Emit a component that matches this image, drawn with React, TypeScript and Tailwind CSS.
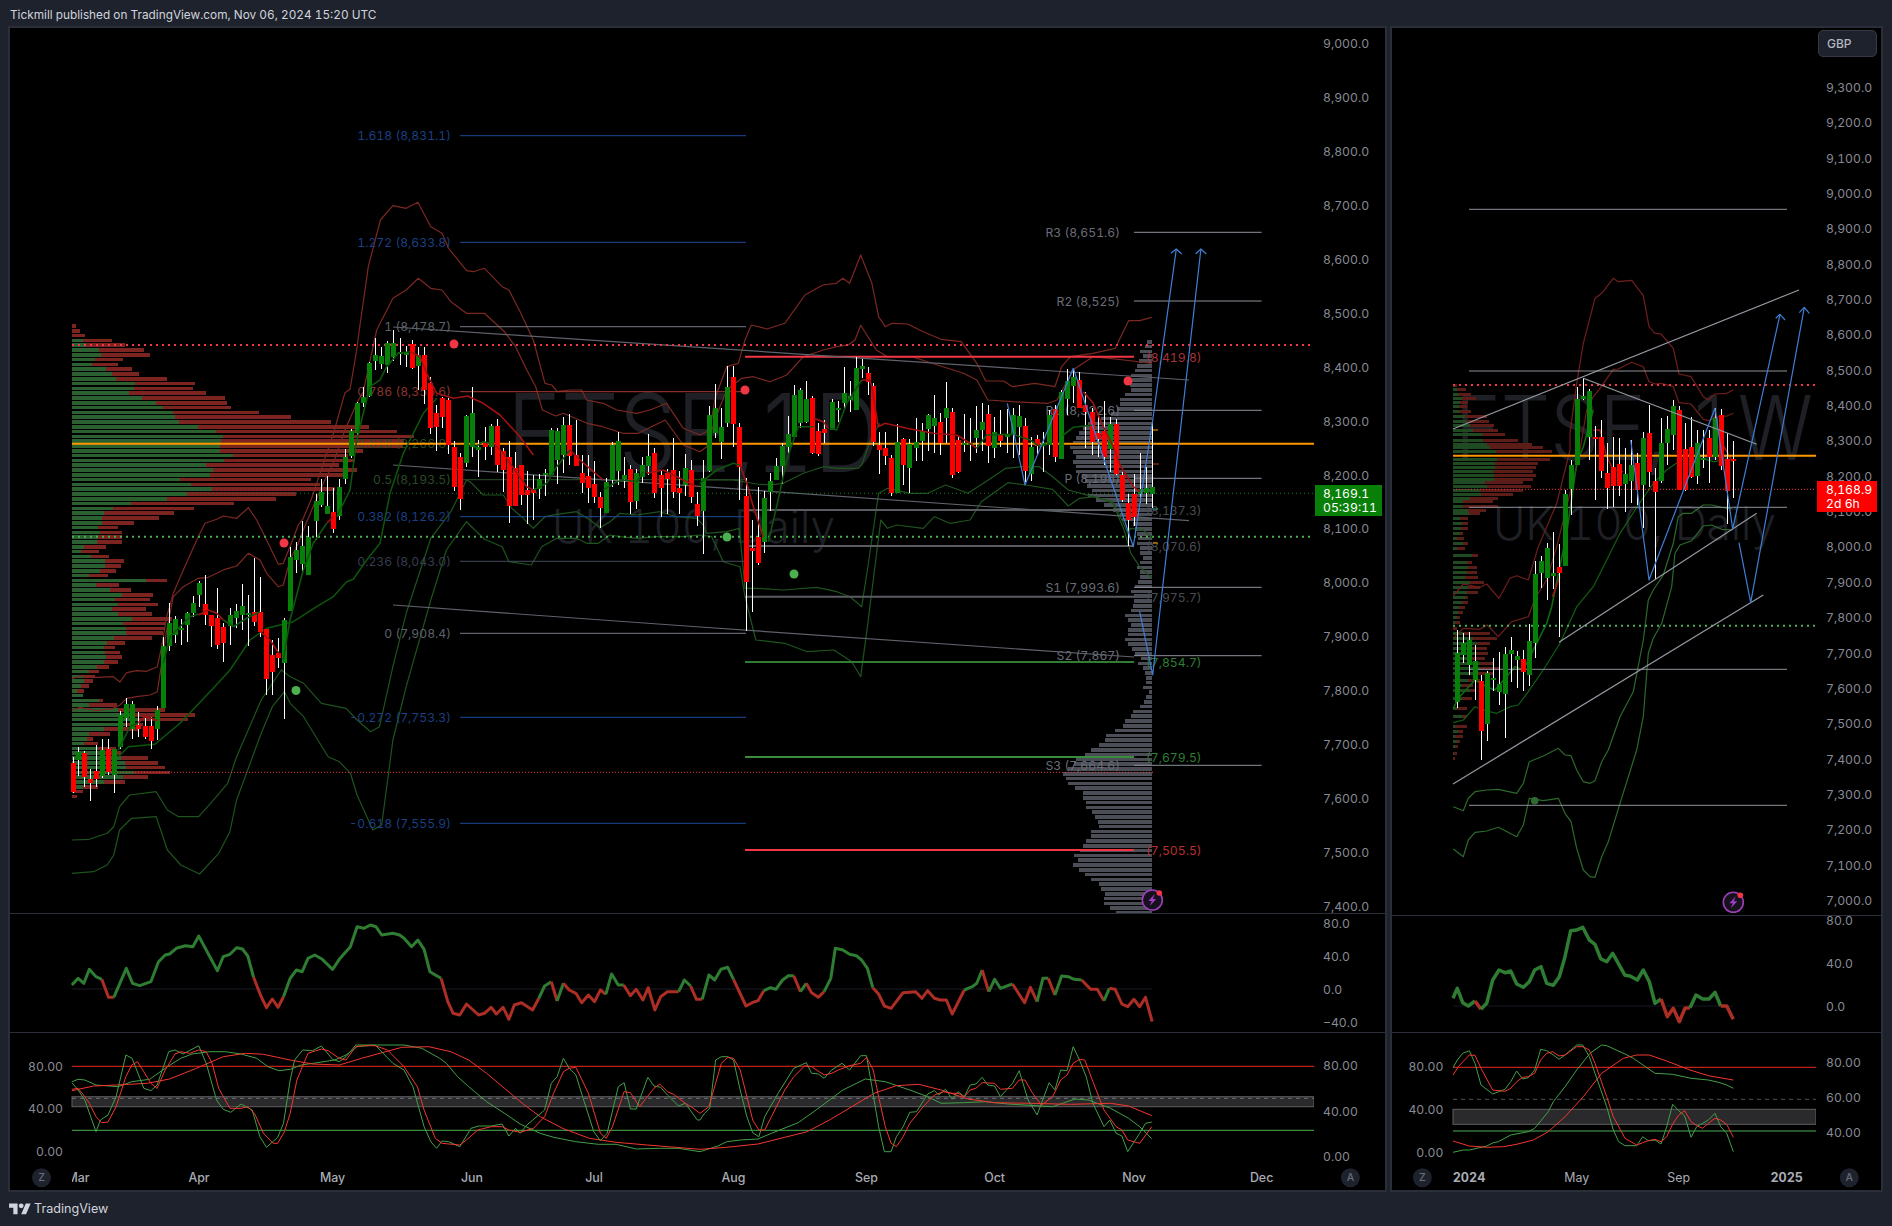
import React from "react";

const Z = (x0: number, y0: number, sx: number) => (...a: number[]) => {
  const o: string[] = [];
  for (let i = 0; i < a.length; i += 2) o.push((x0 + a[i] / sx).toFixed(1) + "," + (y0 + a[i + 1] / 3).toFixed(1));
  return o;
};
const z1 = Z(0, 0, 2.24), z2 = Z(700, 200, 2.24), z4 = Z(0, 900, 2.24), z5 = Z(700, 900, 2.24), z7 = Z(0, 500, 2.24);
const z10 = Z(70, 330, 3), z11 = Z(470, 340, 3), z12 = Z(800, 340, 3), z3 = Z(1380, 0, 3), z6 = Z(1380, 900, 3), z8 = Z(1000, 430, 3), z9 = Z(1400, 450, 3);
const L = (...a: string[][]) => a.flat().join(" ");

const GC = "#087f08", RC = "#ff0000";
const P = ({ p, c, w = 1, d }: { p: string; c: string; w?: number; d?: string }) => (
  <polyline points={p} fill="none" stroke={c} strokeWidth={w} strokeDasharray={d} strokeLinejoin="round" />
);
const H = ({ a, b, y, c, w = 1, d }: { a: number; b: number; y: number; c: string; w?: number; d?: string }) => (
  <line x1={a} x2={b} y1={y} y2={y} stroke={c} strokeWidth={w} strokeDasharray={d} />
);
const T = ({ x, y, c, a = "start", s = 12.2, w, children }: any) => (
  <text x={x} y={y} fill={c} textAnchor={a} fontSize={s} fontWeight={w} dominantBaseline="central">{children}</text>
);

type C = number[];
const candles = (data: C[], x0: number, y0: number, sx: number, bw = 5) =>
  data.map((d, i) => {
    const [zx, g, bt, bb, wt, wb] = d;
    const x = x0 + zx / sx;
    return (
      <g key={i} shapeRendering="crispEdges">
        <rect x={Math.round(x) - 0.5} y={y0 + wt / 3} width={1} height={(wb - wt) / 3} fill="#fff" />
        <rect x={Math.round(x) - (bw - 1) / 2 - 0.5} y={y0 + bt / 3} width={bw} height={Math.max(2, (bb - bt) / 3)} fill={g ? GC : RC} />
      </g>
    );
  });

const C10: C[] = [[10,0,1300,1385,1282,1390],[25,1,1266,1290,1250,1338],[43,0,1270,1340,1262,1372],[61,0,1348,1358,1318,1412],[79,0,1324,1348,1244,1372],[97,1,1260,1338,1228,1345],[115,0,1258,1326,1226,1334],[133,1,1258,1336,1258,1390],[151,1,1156,1250,1144,1258],[169,1,1122,1165,1104,1190],[187,1,1122,1197,1112,1226],[205,0,1185,1197,1146,1220],[226,0,1188,1220,1165,1226],[244,0,1188,1234,1162,1258],[262,1,1140,1196,1128,1230],[280,1,948,1134,920,1134],[298,1,880,948,820,962],[316,1,868,916,858,940],[334,1,895,898,868,945],[352,1,849,886,845,935],[370,1,820,848,798,860],[388,1,760,795,752,830],[406,0,822,854,736,885],[424,0,856,887,856,952],[442,0,864,945,775,957],[460,0,891,938,880,995],[480,1,856,887,835,945],[499,1,844,863,822,895],[517,1,828,854,762,900],[535,1,848,854,796,947],[553,0,846,875,685,888],[571,0,846,905,742,920],[589,0,897,1046,897,1094],[607,0,975,1025,930,1094],[625,0,969,983,924,1013],[643,1,870,998,865,1166],[661,1,682,842,652,842],[679,1,660,689,635,730],[697,1,648,701,573,726],[715,1,620,734,588,734],[737,1,513,572,491,630],[754,1,487,524,447,530],[772,1,528,551,437,552],[790,0,546,596,474,608],[808,1,471,557,447,570],[826,1,382,448,358,462],[844,1,303,377,298,385],[862,1,220,308,215,325],[880,1,201,220,170,230],[898,1,100,198,95,200],[916,1,76,92,25,120],[934,1,78,101,50,118],[952,1,40,104,32,128],[970,1,40,80,0,92],[990,1,66,70,25,105],[1008,1,68,72,48,112],[1026,0,42,113,30,116],[1044,1,76,107,50,180],[1062,0,76,180,52,222],[1081,0,160,293,140,312],[1099,0,250,290,226,362],[1117,0,205,260,200,295],[1135,0,210,344,205,372],[1153,0,352,472,334,482],[1171,0,382,506,370,540],[1189,1,258,400,255,410]];
const C11: C[] = [[7,1,220,322,141,350],[25,1,322,329,300,410],[46,0,307,320,262,360],[64,1,258,320,252,345],[82,0,258,374,237,396],[100,0,333,389,325,456],[118,0,351,497,303,548],[136,0,384,497,337,497],[154,0,376,464,376,495],[172,0,450,464,393,552],[190,0,450,458,405,540],[208,1,418,446,402,476],[226,1,400,406,388,468],[244,1,270,405,265,405],[262,1,274,359,265,432],[280,1,255,345,232,398],[298,0,255,347,222,376],[319,0,345,377,240,377],[337,0,400,429,345,458],[355,0,408,443,345,490],[373,0,432,471,363,488],[391,0,471,503,456,563],[409,1,426,518,414,518],[427,1,315,419,307,442],[445,1,303,392,276,436],[463,1,405,418,350,445],[481,0,388,485,376,521],[499,1,400,483,388,507],[517,1,376,411,350,428],[535,1,348,377,283,405],[553,0,339,460,323,473],[574,0,405,443,392,530],[592,0,400,418,388,521],[610,0,390,455,294,473],[628,0,444,460,394,521],[646,1,385,436,342,469],[664,0,390,470,360,488],[682,0,492,527,455,557],[700,1,415,512,360,641],[718,1,225,392,198,395],[736,1,204,278,132,295],[754,1,262,305,205,356],[772,1,141,248,78,262],[790,0,111,251,78,320],[808,0,262,380,250,480],[829,0,468,725,415,873],[847,0,624,632,540,815],[865,0,591,668,441,675],[883,1,474,605,453,640],[901,1,423,455,400,513],[919,1,378,420,355,420],[937,1,318,377,310,432],[955,1,283,320,228,340],[973,1,165,290,135,293],[991,1,150,250,145,265],[1009,1,177,245,123,250],[1027,0,174,339,168,343],[1045,0,274,342,250,347],[1063,0,267,278,240,310],[1085,1,186,269,178,270],[1103,1,204,210,183,245],[1121,1,159,189,82,205],[1139,1,168,180,123,215],[1157,1,84,209,52,209],[1175,1,78,86,58,115],[1193,0,99,125,80,165]];
const C12: C[] = [[220,0,138,307,130,318],[238,0,316,330,276,403],[256,0,324,347,275,375],[274,0,354,459,345,467],[292,1,306,460,252,460],[310,0,297,374,295,435],[328,1,312,384,298,458],[349,1,306,323,235,363],[367,1,273,304,248,362],[385,1,225,267,222,332],[403,1,234,258,164,340],[421,0,246,309,220,345],[439,1,204,233,126,310],[457,0,216,404,205,413],[475,0,300,396,290,398],[493,1,310,313,222,335],[511,1,310,312,235,362],[529,1,271,294,197,340],[547,1,246,270,188,332],[565,0,222,318,195,368],[583,1,276,323,232,355],[601,0,285,303,210,322],[622,1,284,286,208,338],[640,1,226,284,205,353],[658,1,228,261,195,345],[676,0,258,393,235,425],[694,1,321,402,290,422],[712,0,297,318,285,345],[730,1,310,316,275,395],[748,1,225,316,210,345],[766,0,208,352,196,365],[784,1,155,356,150,358],[802,1,124,177,88,225],[820,1,112,138,85,190],[838,0,120,204,95,205],[856,0,196,216,155,325],[877,0,216,306,205,345],[895,0,279,297,225,350],[913,0,273,351,183,375],[931,1,252,326,232,397],[949,0,252,402,238,405],[967,0,406,480,395,485],[985,0,490,540,462,617],[1003,0,462,530,402,558],[1021,1,448,462,340,490],[1039,1,443,460,380,492],[1057,1,441,461,240,505]];
const CR: C[] = [[232,1,1960,2105,1890,2125],[250,1,1930,1965,1900,1990],[268,1,1920,1995,1895,2025],[286,1,1983,2040,1935,2100],[304,0,2042,2192,2025,2280],[322,1,2020,2172,2012,2222],[340,1,2035,2038,1975,2072],[358,1,2053,2075,1955,2115],[376,1,1962,2082,1940,2213],[394,1,1950,1962,1912,2045],[412,1,1968,1980,1952,2065],[430,0,1978,2016,1950,2072],[448,1,1923,2025,1872,2058],[466,1,1722,1928,1683,1973],[484,1,1683,1718,1668,1765],[502,1,1643,1733,1630,1800],[520,1,1720,1727,1596,1768],[538,0,1702,1719,1632,1910],[556,1,1482,1697,1470,1697],[574,1,1395,1468,1380,1545],[592,1,1197,1395,1160,1395],[610,1,1187,1198,1135,1200],[628,1,1173,1310,1167,1380],[646,0,1312,1316,1278,1500],[664,0,1311,1412,1260,1433],[682,0,1420,1463,1330,1527],[700,0,1402,1458,1310,1520],[718,0,1392,1458,1315,1488],[736,1,1422,1452,1345,1535],[754,1,1395,1443,1320,1508],[772,0,1390,1470,1360,1515],[790,1,1314,1455,1295,1585],[808,0,1300,1415,1215,1462],[826,0,1443,1475,1405,1738],[844,1,1330,1442,1255,1450],[862,1,1288,1328,1248,1395],[880,1,1218,1304,1200,1350],[898,0,1230,1469,1218,1470],[916,0,1347,1469,1270,1472],[934,0,1340,1430,1250,1435],[952,1,1330,1428,1290,1452],[970,1,1375,1378,1290,1405],[988,0,1314,1372,1290,1450],[1006,1,1253,1372,1225,1380],[1024,0,1246,1397,1228,1410],[1042,0,1378,1472,1300,1572],[1060,0,1378,1380,1323,1493]];

const VPL: number[][] = [[161,170],[161,179],[161,190],[185,251],[193,280],[222,323],[226,336],[212,276],[206,264],[238,296],[250,311],[260,374],[302,437],[300,432],[290,461],[318,504],[350,508],[365,517],[388,580],[392,652],[400,741],[444,827],[484,889],[500,927],[495,905],[492,903],[492,813],[522,780],[502,795],[462,760],[478,800],[470,770],[404,697],[428,716],[475,750],[418,663],[374,618],[294,524],[252,435],[232,390],[228,356],[228,300],[220,264],[225,273],[220,273],[218,273],[188,237],[182,222],[204,244],[236,278],[236,271],[224,260],[199,242],[328,374],[216,267],[246,293],[274,343],[258,336],[264,354],[250,327],[264,340],[296,385],[276,370],[282,370],[282,366],[256,340],[240,280],[234,258],[236,269],[238,273],[234,264],[218,244],[200,222],[186,213],[188,208],[182,199],[172,188],[186,186],[222,231],[200,262],[264,370],[300,437],[310,421],[280,320],[234,312],[200,246],[195,208],[188,220],[220,260],[230,270],[270,332],[280,354],[283,370],[300,380],[276,332],[234,280],[185,220],[166,186],[162,172]];
const VPR: number[][] = [[1156,224,230],[1168,232,258],[1182,238,272],[1195,245,287],[1207,240,265],[1220,238,262],[1233,236,272],[1250,255,320],[1263,260,327],[1276,270,342],[1290,280,354],[1303,306,375],[1320,310,414],[1333,320,456],[1343,330,488],[1355,348,515],[1378,350,510],[1390,345,473],[1402,345,467],[1414,340,460],[1426,342,468],[1437,342,459],[1448,315,430],[1460,320,452],[1470,300,428],[1483,302,398],[1495,270,355],[1505,250,340],[1518,250,355],[1531,265,318],[1541,267,300],[1556,240,265],[1571,245,265],[1586,242,265],[1601,240,250],[1616,230,252],[1631,250,265],[1646,230,255],[1666,275,295],[1686,260,275],[1701,265,290],[1716,260,292],[1731,255,295],[1746,270,312],[1761,265,300],[1776,260,295],[1791,255,265],[1806,245,265],[1821,238,255],[1836,235,250],[1851,230,240],[1866,225,240],[1886,220,230],[1900,250,330],[1915,280,350],[1930,290,330],[1945,280,320],[1960,285,325],[1975,275,315],[1990,300,340],[2005,300,360],[2020,290,340],[2040,265,300],[2055,245,280],[2070,270,285],[2095,245,275],[2125,230,260],[2150,245,260],[2180,225,260],[2195,235,250],[2210,225,250],[2225,230,240],[2240,225,235],[2260,223,230],[2275,220,225]];

const grayKnots = [[340,1147],[355,1140],[370,1135],[385,1129],[400,1122],[410,1115],[425,1084],[440,1073],[460,1073],[480,1085],[497,1093],[510,1117],[527,1135],[543,1140],[577,1140],[587,1134],[603,1134],[613,1128],[643,1128],[650,1134],[660,1140],[673,1146],[697,1146],[705,1140],[712,1134],[722,1122],[733,1110],[740,1104],[747,1092],[753,1085],[763,1073],[773,1062],[778,1067],[790,1079],[800,1085],[810,1092],[820,1098],[833,1092],[840,1085],[850,1079],[863,1073],[873,1085],[880,1098],[897,1104],[907,1110],[912,1117]];
const grayLeft = (y: number) => {
  for (let i = 1; i < grayKnots.length; i++) {
    const [a, b] = grayKnots[i - 1], [c, d] = grayKnots[i];
    if (y <= c) return b + ((y - a) / (c - a)) * (d - b);
  }
  return 1117;
};
const grayRows: number[] = [];
for (let y = 340; y <= 912; y += 4.8) grayRows.push(y);

const Rr1 = L(z10(6,1045,40,1036,80,1042,130,1040,150,1056,170,1028,200,1022,230,1024,262,1010,275,950,290,860,310,790,340,720,385,620,405,580,440,568,460,558,500,565,535,533,560,570,580,610,625,703,640,700,660,650,685,585,700,565,725,505,760,400,790,312,825,188,840,178,860,60,868,0), z1(825,800,852,660,880,617,910,625,936,607,965,680,990,700,1005,745,1045,812,1060,815,1085,805,1125,860,1140,870,1165,935), z11(190,0,225,130,245,135,262,155,300,150,335,150,350,180,400,190,440,210,500,220,540,210,590,190,610,220,640,265,690,285,720,270,735,175,770,80,805,70,825,0), z2(115,375,150,387,190,370,235,285,275,255,305,250,320,235,335,250,360,165,385,250,400,350,415,380,430,370,465,372,500,395,540,418,585,425,620,490,640,543,680,543,700,560,750,550,795,560,810,500,830,470,880,460,930,445,960,362,985,362,1012,352));
const Rr2 = L(z10(6,1140,30,1133,80,1142,130,1135,150,1125,170,1105,200,1100,240,1095,262,1085,275,1000,290,900,310,800,340,770,385,745,415,742,465,718,500,708,535,670,570,690,590,730,625,770,640,765,660,690,685,640,700,600,725,540,760,460,790,400,825,300,860,220,880,185,920,0), z1(880,895,910,870,937,835,965,865,990,870,1010,905,1045,940,1085,940,1130,995,1155,1040,1180,1110,1200,1160,1215,1230,1245,1248,1262,1240,1315,1270,1350,1280,1395,1300,1430,1300,1490,1260), z11(640,315,690,335,710,320,735,240,750,200,770,150,815,115,850,110,900,125,950,105,1000,50,1060,30,1100,20,1135,15,1155,0), z2(360,376,395,450,420,470,475,470,520,490,590,520,620,540,645,600,700,605,780,610,800,600,835,510,880,470,950,480,1012,490));
const Gg1 = L(z7(161,1020,200,1018,240,1000,255,980,268,920,290,885,350,875,375,930,400,950,445,950,475,905,510,850,530,770,585,600,630,510,650,530,680,550,720,610,775,625,800,660,830,695,850,680,880,500,910,340,965,115,1010,35,1045,-60), z11(0,425,40,465,100,465,125,505,160,535,190,565,225,530,260,523,320,515,360,540,390,563,420,545,450,520,500,525,570,515,620,530,680,535,700,555,710,580,770,575,808,565,825,745,860,745,940,750,1040,742,1100,755,1140,770,1175,800), z2(375,1110,400,880,420,865,470,880,510,880,550,855,600,880,640,845,685,805,720,800,760,800,790,830,825,870,880,890,925,905,945,960,960,1005), z8(390,295,430,300,457,325));
const Gg2 = L(z7(161,1120,210,1115,240,1095,255,1065,268,990,295,955,350,950,375,1050,405,1095,447,1122,490,1060,515,995,530,900,585,700,610,620,637,575,650,610,680,650,735,770,760,785,785,820,800,885,835,990,855,975,880,720,910,560,965,300,1000,150,1045,65,1085,118,1125,140,1140,185,1190,195), z11(215,620,260,595,320,595,350,610,385,610,420,585,450,590,500,595,560,590,640,590,690,585,725,590,760,665,810,680,825,770), z2(125,1320,190,1330,240,1355,300,1350,340,1385,360,1430,375,1280,405,960,420,985,440,975,500,985,525,950,560,970,605,960,630,905,690,848,730,855,790,868,825,918,850,895,885,890,925,910,950,990,965,1060,985,1100,1012,1135));
const MS = L(z10(145,1280,175,1250,255,1243,330,1180,430,1075,480,1020,540,930,590,895,670,875,740,830,790,800,830,755,850,748,890,690,930,640,960,490,1000,370,1060,250,1100,205));
const MM = L(z11(700,420,790,420,860,432,900,435,940,430,1000,400,1060,380,1100,385,1165,385), z12(185,375,215,290,240,250));
const MAG = "#0d560d", MAR = "#a01212";
const fastL: [string, string][] = [
  [MAG, L(z10(145,1260,180,1190,205,1178))],
  [MAR, L(z10(205,1178,225,1160,245,1165,262,1172))],
  [MAG, L(z10(280,1000,300,920,360,860,385,852))],
  [MAR, L(z10(385,855,415,840,440,850,460,870))],
  [MAG, L(z10(460,870,490,890,530,865,570,845))],
  [MAR, L(z10(570,905,600,930,630,975))],
  [MAG, L(z10(640,990,660,870,700,720,730,640,770,580))],
  [MAR, L(z10(770,580,790,560))],
  [MAG, L(z10(800,560,840,480,860,330,880,250,900,170,930,150,950,110,985,70,1020,65))],
  [MAR, L(z10(1020,65,1050,80,1070,130,1100,190,1150,205,1195,198), z11(0,172))],
  [MAR, L(z11(0,172,40,190,90,225,150,290,190,345))],
  [MAG, L(z11(10,325,40,305,60,310))],
  [MAR, L(z11(70,310,100,340,120,370,170,440,190,450))],
  [MAG, L(z11(190,450,230,430,260,380,300,330))],
  [MAR, L(z11(300,330,330,360,370,395,400,420))],
  [MAG, L(z11(400,450,440,425,460,420,500,425,520,395))],
  [MAR, L(z11(530,400,580,390,620,410,680,440))],
  [MAG, L(z11(690,430,740,390,790,370,810,375))],
  [MAR, L(z11(810,375,830,430,850,500,880,590))],
  [MAG, L(z11(895,605,920,500,950,360,985,260,1030,260))],
  [MAR, L(z11(1030,235,1060,245,1075,265))],
  [MAG, L(z11(1080,265,1100,270,1130,190,1175,120))],
  [MAR, L(z11(1175,120,1200,120), z12(215,140,235,260,255,250,320,265,400,280,470,285,510,310,530,325))],
  [MAG, L(z12(530,325,560,285,640,283,690,300,720,320,750,310))],
  [MAG, L(z12(790,285,820,262,880,255))],
  [MAR, L(z12(850,155,880,190,905,250,940,320,960,375,1000,440,1020,455))],
];

const seg = (cs: [number, string[]][], w: number) =>
  cs.map(([g, p], i) => <P key={i} p={p.join(" ")} c={g ? "#2e7d32" : "#ad2e24"} w={w} />);

const oscL: [number, string[]][] = [
  [1,z4(161,255,175,235,188,250,200,208,215,230,228,238)],[0,z4(228,238,243,292,255,292)],
  [1,z4(255,292,283,205,297,250,313,257,338,245,355,185,370,165,380,162,395,145,415,137,432,140,445,108,487,212,500,170,515,163,530,143,543,147,555,168,568,232)],
  [0,z4(568,232,585,290,597,323,610,297,623,322,635,290)],
  [1,z4(635,290,650,235,664,210,677,215,690,175,705,165,722,178,745,208,760,178,785,140,800,80,815,85,830,75,842,80,855,105,880,100,895,105,905,115,922,140,936,120,950,148,963,215,975,225,988,235)],
  [0,z4(988,235,1003,305,1015,340,1030,345,1045,312,1072,345,1085,340,1100,322,1112,342,1127,322,1140,358,1152,315,1168,308,1193,330,1207,295)],
  [1,z4(1207,295,1220,258,1235,245)],[0,z4(1235,245,1248,303)],[1,z4(1248,303,1262,250)],
  [0,z4(1262,250,1275,270,1290,280,1303,308,1318,285,1332,305,1345,270,1357,283)],
  [1,z4(1357,283,1370,222,1385,255,1397,255)],
  [0,z4(1397,255,1412,287,1425,268,1440,300,1452,263,1467,330,1480,290,1495,275,1510,275,1520,275)],
  [1,z4(1520,275,1533,240,1547,258)],[0,[...z4(1547,258,1560,298,1568,298),...z5(5,298)]],
  [1,z5(5,298,20,225,33,240,47,208,62,202,75,238)],[0,z5(75,238,103,318,117,308,130,302,143,272)],
  [1,z5(143,272,158,263,170,268,185,240,198,227,210,227)],[0,z5(210,227,225,275)],[1,z5(225,275,238,250)],
  [0,z5(238,250,250,278,265,292,278,275)],
  [1,z5(278,275,293,235,303,145,320,150,335,163,350,167,362,180,375,205,387,263)],
  [0,z5(387,263,400,282,413,318,428,325,455,278,483,275,497,295,510,272,525,295,538,300,552,300,565,342,592,270)],
  [1,z5(592,270,610,260,620,250,632,210)],[0,z5(632,210,647,275)],[1,z5(647,275,660,238,673,265,700,252)],
  [0,z5(700,252,727,308,740,262,755,305)],[1,z5(755,305,768,235,780,235)],[0,z5(780,235,795,285)],
  [1,z5(795,285,810,228,825,230,838,238,855,240)],[0,z5(855,240,875,268,890,268,905,302)],[1,z5(905,302,917,265)],
  [0,z5(917,265,930,268,945,312,958,320,972,298,985,320,998,292,1013,365)],
];
const oscR: [number, string[]][] = [
  [1,z6(219,295,232,265,248,308,265,318,285,303)],[0,z6(285,303,303,328)],
  [1,z6(303,328,320,310,338,240,357,210,375,218,392,213,410,252,430,262,448,245,464,210,483,200,500,250,520,256,538,230,555,170,572,92,590,90,608,82,628,120,645,133,662,176,680,185,698,160,735,226,750,228,772,240,790,210,808,245,825,310,843,297)],
  [0,z6(843,297,862,350,880,325,898,365,915,325,930,323)],
  [1,z6(930,323,948,285,968,297,987,297,1005,277,1022,318)],[0,z6(1022,318,1040,318,1060,358)],
];

const stG = "#43a047", stR = "#f4362e";
const fgL = L(z4(161,548,175,570,190,600,215,695,225,660,242,645,260,590,282,465,296,475,322,565,338,572,352,555,378,455,392,450,410,462,445,437,462,490,485,600,500,628,517,637,540,612,565,630,582,710,597,742,622,712,635,670,650,540,660,480,678,450,700,452,720,438,745,478,760,485,775,470,797,435,840,435,880,490,905,510,925,560,950,680,965,725,978,745,990,723,1005,725,1030,740,1055,685,1072,678,1100,678,1125,672,1140,708,1155,685,1165,700,1180,675,1220,630,1235,550,1248,530,1262,475,1275,505,1290,525,1305,590,1330,695,1345,722,1360,700,1385,560,1398,548,1412,627,1425,627,1451,532,1465,558,1480,562,1495,585,1520,618,1535,610,1562,660,1568,660), z5(10,640,22,625,35,480,48,470,62,470,75,480,90,570,105,650,118,698,132,710,145,650,175,580,210,505,238,488,250,520,265,522,278,535,295,510,318,490,335,510,360,467,373,467,385,560,400,680,413,755,428,755,440,710,455,680,470,637,485,635,510,582,525,572,535,585,550,568,565,598,578,575,592,590,605,555,618,552,632,532,645,555,660,558,673,590,700,550,715,512,735,600,755,645,782,548,795,570,808,510,822,512,836,440,850,480,865,530,880,610,905,680,918,660,932,700,945,708,958,755,985,700,998,670,1012,666));
const frL = L(z4(161,568,175,565,190,590,200,610,215,650,228,668,242,666,260,620,282,530,295,495,308,485,322,515,338,550,352,565,370,510,392,462,405,455,425,460,445,450,462,455,475,490,490,565,515,625,540,625,555,620,570,640,590,700,612,730,622,730,637,695,650,640,665,540,690,460,720,447,735,452,760,475,775,480,797,440,815,437,840,437,868,450,905,500,935,560,950,630,975,715,990,730,1030,735,1045,720,1070,690,1100,680,1125,680,1140,690,1165,697,1195,685,1220,650,1240,580,1262,515,1275,505,1290,502,1318,580,1345,700,1358,715,1372,680,1398,575,1412,578,1433,620,1450,590,1465,565,1478,552,1495,575,1508,582,1535,610,1550,622,1568,640), z5(20,620,35,550,48,490,62,472,75,475,90,510,105,590,118,660,132,690,145,690,160,650,175,610,190,570,210,530,235,497,250,500,278,525,295,520,310,510,335,497,360,490,373,472,388,510,400,590,415,680,428,730,440,740,455,710,470,670,500,620,525,585,545,575,565,580,578,580,592,590,605,570,618,565,632,548,660,550,673,568,700,565,715,540,728,540,745,580,765,615,790,590,808,540,822,525,836,490,850,478,862,480,880,545,905,630,932,680,945,690,958,720,985,730,1012,680));
const sgL = L(z4(161,545,175,538,190,540,215,555,265,560,295,545,335,538,375,500,405,475,430,462,470,455,505,455,540,462,575,475,600,500,625,512,650,508,675,495,710,488,750,480,775,465,800,440,840,435,905,435,945,445,985,475,1000,490,1025,530,1050,560,1090,605,1130,640,1165,672,1210,700,1240,712,1290,725,1340,733,1380,733,1425,747,1480,745,1520,745,1568,755), z5(40,738,60,725,90,720,130,717,160,700,220,668,260,630,320,570,370,537,415,545,470,570,510,590,540,610,590,608,640,605,690,612,790,620,840,597,870,600,920,625,960,655,985,680,1012,716));
const srL = L(z4(161,572,210,558,260,555,330,550,380,537,440,505,500,470,550,460,590,463,650,480,700,492,760,495,810,475,900,442,960,440,1010,455,1050,480,1090,520,1130,565,1170,610,1210,650,1260,685,1320,715,1380,727,1450,735,1568,748), z5(60,742,130,732,190,712,240,695,290,660,340,620,390,580,440,557,490,553,540,570,600,597,660,608,740,610,830,613,920,610,960,618,1012,647));

const fgR = L(z6(219,503,232,480,248,460,268,452,285,490,303,555,338,582,375,568,392,545,410,513,428,537,445,533,464,510,482,448,500,452,520,465,537,478,555,465,590,435,608,435,628,470,645,520,680,620,700,690,716,725,735,737,770,737,788,710,805,722,825,720,843,732,860,680,878,613,896,632,914,648,933,712,950,680,968,670,985,660,1005,640,1022,680,1040,700,1060,755));
const frR = L(z6(219,525,235,500,268,465,285,466,303,505,338,570,375,574,392,565,410,545,428,532,445,530,464,520,482,480,500,460,518,455,537,468,555,465,590,440,608,440,628,450,645,490,680,590,700,650,735,715,770,735,788,728,805,722,825,718,843,725,860,710,878,672,896,645,914,632,933,665,950,677,968,685,985,670,1005,655,1022,660,1040,673,1060,712));
const sgR = L(z6(219,757,250,750,268,750,320,738,340,728,355,725,392,705,445,695,464,685,505,635,520,605,555,560,590,510,630,460,665,435,680,437,735,462,760,475,825,520,878,523,933,535,985,540,1020,548,1040,555,1060,565));
const srR = L(z6(219,723,268,738,320,742,370,740,410,733,460,720,505,695,555,650,610,590,665,520,730,475,770,465,808,465,860,483,930,510,985,527,1060,540));

const Bolt = ({ x, y }: { x: number; y: number }) => (
  <g transform={`translate(${x} ${y})`}>
    <circle r={10} fill="#16111c" stroke="#9c3fb8" strokeWidth={1.6} />
    <path d="M2.5 -6 L-4 1 H-0.5 L-2.5 6 L4 -1 H0.5 Z" fill="#a33cc7" />
    <circle cx={7} cy={-7} r={2.8} fill="#f23645" />
  </g>
);

const rows = (from: number, to: number, step: number) => {
  const o: number[] = [];
  for (let v = from; v >= to; v -= step) o.push(v);
  return o;
};
const fmt = (v: number) => v.toLocaleString("en-US", { minimumFractionDigits: 1 });

function MainLeft() {
  const blue = "#1c4a96", blueT = "#1b3f80";
  const fib: [string, number, string, string][] = [
    ["1.618 (8,831.1)", 135.7, blue, blueT], ["1.272 (8,633.8)", 242.3, blue, blueT], ["1 (8,478.7)", 326.7, "#787b86", "#5d606b"],
    ["0.786 (8,356.6)", 391.7, "#a83a32", "#8a3430"], ["0.618 (8,266.8)", 443.7, "#2a4f2a", "#2a4a25"], ["0.5 (8,193.5)", 479.7, "#2a4f2a", "#2a4a25"],
    ["0.382 (8,126.2)", 516.7, blue, blueT], ["0.236 (8,043.0)", 561.3, "#434a5e", "#363c4e"], ["0 (7,908.4)", 633.3, "#787b86", "#5d606b"],
    ["-0.272 (7,753.3)", 717.3, blue, blueT], ["-0.618 (7,555.9)", 823.3, blue, blueT],
  ];
  const piv: [string, number][] = [["R3 (8,651.6)", 232.3], ["R2 (8,525)", 301], ["R1 (8,322.6)", 410.3], ["P (8,196)", 478.3], ["S1 (7,993.6)", 587.3], ["S2 (7,867)", 655.7], ["S3 (7,664.6)", 765.3]];
  const lev: [string, number, string, string, number][] = [["(8,419.8)", 356.7, "#f23645", "#a83238", 357.3], ["(8,137.3)", 510, "#5a5c62", "#4a4c52", 510.7], ["(8,070.6)", 546, "#5a5c62", "#4a4c52", 546.7], ["(7,975.7)", 596.7, "#5a5c62", "#4a4c52", 597.7], ["(7,854.7)", 662, "#2e7d32", "#2e7d32", 662.5], ["(7,679.5)", 757, "#388e3c", "#2e7d32", 757.7], ["(7,505.5)", 850, "#f23645", "#b7302a", 850.7]];
  return (
    <svg viewBox="10 28 1304 885" width={1304} height={885} className="block">
      <text x={507} y={472} fill="#1e2025" fontSize={108} fontWeight={300} textLength={373} lengthAdjust="spacingAndGlyphs">FTSE,1D</text>
      <text x={552} y={543} fill="#1e2025" fontSize={46} fontWeight={300} textLength={283} lengthAdjust="spacingAndGlyphs">UK 100, Daily</text>
      <g shapeRendering="crispEdges">
        {grayRows.map((y, i) => {
          const l = grayLeft(y) + (i % 5 === 2 ? -3 : i % 7 === 3 ? 3 : 0);
          return <rect key={i} x={l} y={y} width={1152 - l} height={3.6} fill="#4b4e57" />;
        })}
        {VPL.map(([g, r], i) => {
          const y = 326 + i * 4.8 - 1.8;
          const ge = g / 2.24, re = r / 2.24;
          return (
            <g key={i}>
              <rect x={72} y={y} width={Math.max(0, ge - 72)} height={3.6} fill="#2b6030" />
              <rect x={ge} y={y} width={re - ge} height={3.6} fill="#7c2520" />
            </g>
          );
        })}
      </g>
      <P p={Rr1} c="#7c2822" w={1.2} /><P p={Rr2} c="#7c2822" w={1.2} /><P p={Gg1} c="#1e541e" w={1.2} /><P p={Gg2} c="#1e541e" w={1.2} /><P p={MM} c="#1e541e" w={1.2} />
      {fib.map(([t, y, c, tc]) => (
        <g key={t}><H a={460} b={746} y={y} c={c} /><T x={451} y={y} c={tc} a="end">{t}</T></g>
      ))}
      {piv.map(([t, y]) => (
        <g key={t}><H a={1134} b={1261.6} y={y} c="#8e9199" /><T x={1120} y={y} c="#6a6d78" a="end">{t}</T></g>
      ))}
      {lev.map(([t, y, c, tc, ty]) => (
        <g key={t}><H a={745} b={1134} y={y} c={c} w={2} /><T x={1146} y={ty} c={tc}>{t}</T></g>
      ))}
      <H a={1153} b={1158} y={430} c="#ff9800" /><H a={1153} b={1159} y={464} c="#7c2520" w={1.5} /><H a={1153} b={1158} y={509} c="#26a69a" /><H a={1153} b={1158} y={543} c="#ff9800" />
      <P p="393,327 1189,380" c="#5f626b" w={1.2} /><P p="393,465 1189,520.7" c="#5f626b" w={1.2} /><P p="393,605 700,627 1134,657" c="#5f626b" w={1.2} />
      <H a={72} b={1310} y={345} c="#f23645" w={2} d="2 4" />
      <H a={72} b={1310} y={536.7} c="#4caf50" w={2} d="2 4" />
      <H a={72} b={1155} y={772.3} c="#f23645" w={1} d="1 2" />
      <H a={72} b={1314} y={493.3} c="#1f7a1f" w={1} d="1 3" />
      <H a={72} b={1314} y={443.7} c="#ff9800" w={2} />
      <P p={MS} c={MAG} w={1.5} />
      {candles(C10, 70, 330, 3)}{candles(C11, 470, 340, 3)}{candles(C12, 800, 340, 3)}
      {fastL.map(([c, p], i) => <P key={i} p={p} c={c} w={1.6} />)}
      <circle cx={454} cy={344} r={4.5} fill="#f23645" /><circle cx={745} cy={390} r={4.5} fill="#f23645" /><circle cx={1128} cy={381} r={4.5} fill="#f23645" /><circle cx={284} cy={543} r={4.5} fill="#f23645" />
      <circle cx={296} cy={690.5} r={4.5} fill="#4caf50" /><circle cx={727} cy={537} r={4.5} fill="#4caf50" /><circle cx={794} cy={574} r={4.5} fill="#4caf50" />
      <P p={L(z12(622,190,675,435,820,85,1000,620,1058,240),z2(1067,147))} c="#3f7fd6" w={1.2} />
      <P p={L(z2(985,1235,1014,1425,1122,147))} c="#3f7fd6" w={1.2} />
      <P p={L(z2(1055,160,1067,147,1079,162))} c="#3f7fd6" w={1.2} />
      <P p={L(z2(1110,162,1122,147,1134,162))} c="#3f7fd6" w={1.2} />
      <Bolt x={1152.3} y={900} />
    </svg>
  );
}

function MainRight() {
  const gl = "#2c6a2c";
  return (
    <svg viewBox="1392 28 424 887" width={424} height={887} className="block">
      <text x={1455} y={460} fill="#1e2025" fontSize={90} fontWeight={300} textLength={358} lengthAdjust="spacingAndGlyphs">FTSE, 1W</text>
      <text x={1493} y={540} fill="#1e2025" fontSize={46} fontWeight={300} textLength={283} lengthAdjust="spacingAndGlyphs">UK 100, Daily</text>
      <g shapeRendering="crispEdges">
        {VPR.map(([zy, g, r], i) => {
          const y = zy / 3 - 1.5;
          const ge = 1380 + g / 3, re = 1380 + r / 3;
          return (
            <g key={i}>
              <rect x={1453} y={y} width={Math.max(0, ge - 1453)} height={3.2} fill="#1f4a22" />
              <rect x={ge} y={y} width={re - ge} height={3.2} fill="#5c1d19" />
            </g>
          );
        })}
      </g>
      <P p={L(z9(160,438,190,402,240,412,260,402,297,445,330,385,350,377,385,390,415,290,470,160,510,0),z3(570,1300,590,1150,610,1030,645,895,665,880,700,835,715,845,755,841,790,887,807,980,825,1000,843,1002,880,1045,897,1122,933,1130,970,1190,985,1200,1005,1182,1040,1180,1060,1170))} c="#701f1c" w={1.2} />
      <P p={L(z9(160,565,190,535,240,538,262,525,295,560,335,515,385,500,405,445,440,390,470,290),z3(595,1380,620,1230,640,1190,660,1165,700,1108,715,1107,755,1087,790,1100,807,1145,825,1152,843,1150,880,1160,897,1208,933,1212,970,1258,985,1262,1005,1252,1040,1248,1060,1240))} c="#701f1c" w={1.2} />
      <P p={L(z9(160,1070,190,1082,205,1045,225,1025,260,1020,295,1018,350,1030,370,1000,388,935,430,918,475,895,495,915,513,917,530,960,550,995,570,1000,585,992,605,935,625,900,660,800,700,725,730,570,745,450,760,420,790,375,820,280,835,200,850,190,875,190,910,165,935,165,965,172,998,177))} c={gl} w={1.2} />
      <P p={L(z9(160,1197,190,1220,205,1170,225,1147,260,1143,295,1132,350,1160,370,1125,388,1045,430,1052,475,1045,495,1090,513,1115,530,1195,550,1260,570,1280,585,1282,605,1220,625,1175,660,1060,710,900,730,800,745,610,760,565,785,520,815,410,825,310,840,285,875,272,910,228,935,225,965,238,998,240))} c={gl} w={1.2} />
      <circle cx={1534.7} cy={800.7} r={3.8} fill="#2d6b30" />
      <P p={L(z9(160,818,190,810,225,770,250,780,290,790,330,770,355,765,385,725,430,660,480,580,530,470,580,410,620,330,660,250,715,165,760,100,800,60),z3(925,1365,1000,1385,1040,1380))} c="#125f12" w={1.2} />
      <P p={L(z9(160,775,175,745,225,690,260,710,285,720,345,650,370,660,400,600,440,520,455,470,500,250,530,40),z3(610,1340,640,1230))} c="#0f6a0f" w={1.6} />
      <P p={L(z3(640,1290,660,1290,680,1370,700,1410,730,1415))} c={MAR} w={1.5} />
      <P p={L(z9(457,440,480,380))} c={MAR} w={1.5} />
      <P p={L(z3(1020,1320,1058,1385))} c={MAR} w={1.5} />
      <H a={1469} b={1787} y={209.3} c="#8e9199" /><H a={1469} b={1787} y={371} c="#8e9199" /><H a={1469} b={1787} y={507.3} c="#8e9199" /><H a={1469} b={1787} y={669.3} c="#8e9199" /><H a={1469} b={1787} y={805.3} c="#8e9199" />
      <H a={1453} b={1816} y={385} c="#f23645" w={2} d="2 4" />
      <H a={1453} b={1816} y={625.7} c="#4caf50" w={2} d="2 4" />
      <H a={1453} b={1816} y={489.3} c="#f23645" w={1} d="1 2" />
      <H a={1453} b={1816} y={455.7} c="#ff9800" w={2} />
      {candles(CR, 1380, 0, 3)}
      <P p="1453,429 1799,290" c="#9598a1" w={1.2} /><P p="1583.3,378.3 1756.7,444.3" c="#9598a1" w={1.2} /><P p="1559,642.3 1756.7,513.3" c="#9598a1" w={1.2} /><P p="1453,784 1763.3,595" c="#9598a1" w={1.2} />
      <P p={L(z3(752,1320),z9(747,390),z3(1005,1225),z9(998,237),z3(1200,943))} c="#3f7fd6" w={1.2} />
      <P p={L(z9(1017,278,1052,458),z3(1273,922))} c="#3f7fd6" w={1.2} />
      <P p={L(z3(1187,955,1200,943,1215,960))} c="#3f7fd6" w={1.2} />
      <P p={L(z3(1258,938,1273,922,1288,940))} c="#3f7fd6" w={1.2} />
      <Bolt x={1733.3} y={902.3} />
    </svg>
  );
}

const Axis = ({ labels, className }: { labels: string[]; className: string }) => (
  <div className={`flex flex-col text-[12.2px] leading-[14px] text-[#878a94] ${className}`}>
    {labels.map((l) => <span key={l} className="block">{l}</span>)}
  </div>
);

const Badge = ({ x, y, t }: { x: number; y: number; t: string }) => (
  <g>
    <circle cx={x} cy={y} r={9.5} fill="#1e222d" />
    <T x={x} y={y} c="#6a6d78" a="middle" s={10.5} w={500}>{t}</T>
  </g>
);

export default function App() {
  return (
    <div className="w-[1892px] h-[1226px] bg-[#1e222d] font-['Inter',sans-serif] tabular-nums flex flex-col overflow-hidden">
      <div className="h-[26px] pl-[10px] flex items-center text-[11.8px] text-[#d1d4dc] pt-[6px]">
        Tickmill published on TradingView.com, Nov 06, 2024 15:20 UTC
      </div>
      <div className="flex gap-[3px] pl-[8px] h-[1166px]">
        <div className="w-[1379px] border-2 border-[#2a2e39] bg-black flex flex-col">
          <div className="flex h-[886px] border-b border-[#2a2e39]">
            <MainLeft />
            <div className="relative w-[71px]">
              <Axis labels={rows(9000, 7400, 100).map(fmt)} className="pl-[9px] pt-[9px] gap-[39.95px]" />
              <div className="absolute left-[1px] top-[457px] w-[67px] h-[31px] bg-[#087f08] pl-[8px] pt-[2px] text-[12.2px] leading-[14px] text-white">
                <div>8,169.1</div>
                <div>05:39:11</div>
              </div>
            </div>
          </div>
          <div className="flex h-[119px] border-b border-[#2a2e39]">
            <svg viewBox="10 914 1304 118" width={1304} height={118} className="block">
              <H a={72} b={1152} y={989} c="#1c1d24" />
              {seg(oscL, 3)}
            </svg>
            <Axis labels={["80.0", "40.0", "0.0", "−40.0"]} className="pl-[9px] pt-[3px] gap-[19px]" />
          </div>
          <div className="flex h-[129px]">
            <svg viewBox="10 1033 1304 129" width={1304} height={129} className="block">
              <T x={63} y={1066.7} c="#878a94" a="end">80.00</T>
              <T x={63} y={1108.7} c="#878a94" a="end">40.00</T>
              <T x={63} y={1151.7} c="#878a94" a="end">0.00</T>
              <rect x={72} y={1096.7} width={1242} height={10} fill="#2a2a2c" stroke="#5f5f62" />
              <H a={72} b={1314} y={1098.3} c="#6f727b" d="4 4" />
              <H a={72} b={1314} y={1066.3} c="#f0281e" /><H a={72} b={1314} y={1130.3} c="#4caf50" />
              <P p={sgL} c={stG} /><P p={srL} c={stR} /><P p={fgL} c={stG} /><P p={frL} c={stR} />
            </svg>
            <Axis labels={["80.00", "40.00", "0.00"]} className="pl-[9px] pt-[26px] gap-[31.5px]" />
          </div>
          <div className="flex h-[28px] items-center">
            <svg viewBox="10 1162 1375 28" width={1375} height={28} className="block">
              <defs><clipPath id="tl"><rect x={72} y={1162} width={1242} height={28} /></clipPath></defs>
              <g clipPath="url(#tl)" fontWeight={500}>
                {[["Mar", 78], ["Apr", 199], ["May", 332.6], ["Jun", 472], ["Jul", 594], ["Aug", 733.5], ["Sep", 866.5], ["Oct", 994.6], ["Nov", 1134], ["Dec", 1261.6]].map(([t, x]) => (
                  <T key={t as string} x={x} y={1177.7} c="#a9acb5" a="middle" s={12.4}>{t}</T>
                ))}
              </g>
              <Badge x={41.5} y={1177.7} t="Z" />
              <Badge x={1350.4} y={1177.7} t="A" />
            </svg>
          </div>
        </div>
        <div className="w-[493px] border-2 border-[#2a2e39] bg-black flex flex-col">
          <div className="flex h-[888px] border-b border-[#2a2e39]">
            <MainRight />
            <div className="relative w-[65px]">
              <Axis labels={rows(9300, 7000, 100).map(fmt)} className="pl-[10px] pt-[53px] gap-[21.35px]" />
              <div className="absolute right-[4px] top-[2px] w-[59px] h-[27px] bg-[#1e222d] border border-[#363a45] rounded-[5px] pl-[8px] flex items-center text-[12px] font-medium text-[#b2b5be]">
                GBP
              </div>
              <div className="absolute left-[1px] top-[453px] w-[60px] h-[31px] bg-[#ff0000] pl-[9px] pt-[2px] text-[12.2px] leading-[14px] text-white">
                <div>8,168.9</div>
                <div>2d 6h</div>
              </div>
            </div>
          </div>
          <div className="flex h-[117px] border-b border-[#2a2e39]">
            <svg viewBox="1392 916 424 116" width={424} height={116} className="block">
              <H a={1453} b={1733} y={1006} c="#171823" />
              {seg(oscR, 3.5)}
            </svg>
            <Axis labels={["80.0", "40.0", "0.0"]} className="pl-[10px] mt-[-2px] gap-[29px]" />
          </div>
          <div className="flex h-[129px]">
            <svg viewBox="1392 1033 424 129" width={424} height={129} className="block">
              <T x={1443.3} y={1066.7} c="#878a94" a="end">80.00</T>
              <T x={1443.3} y={1109.3} c="#878a94" a="end">40.00</T>
              <T x={1443.3} y={1152.3} c="#878a94" a="end">0.00</T>
              <rect x={1453} y={1109.3} width={363} height={15} fill="#2a2a2c" stroke="#5f5f62" />
              <H a={1453} b={1816} y={1099.3} c="#50535c" d="4 4" />
              <H a={1453} b={1816} y={1067.3} c="#f0281e" /><H a={1453} b={1816} y={1131} c="#4caf50" />
              <P p={sgR} c={stG} /><P p={srR} c={stR} /><P p={fgR} c={stG} /><P p={frR} c={stR} />
            </svg>
            <Axis labels={["80.00", "60.00", "40.00"]} className="pl-[10px] pt-[23px] gap-[21px]" />
          </div>
          <div className="flex h-[28px] items-center">
            <svg viewBox="1392 1162 489 28" width={489} height={28} className="block">
              <T x={1469} y={1177.7} c="#a9acb5" a="middle" s={12.6} w={700}>2024</T>
              <T x={1576.7} y={1177.7} c="#a9acb5" a="middle" s={12.4} w={400}>May</T>
              <T x={1678.7} y={1177.7} c="#a9acb5" a="middle" s={12.4} w={400}>Sep</T>
              <T x={1786.7} y={1177.7} c="#a9acb5" a="middle" s={12.6} w={700}>2025</T>
              <Badge x={1422.3} y={1177.7} t="Z" />
              <Badge x={1849.3} y={1177.7} t="A" />
            </svg>
          </div>
        </div>
      </div>
      <div className="flex items-center gap-[3px] pl-[9px] h-[34px] pt-[1px]">
        <svg viewBox="0 0 36 28" width={22} height={17} className="block">
          <path d="M14 22H7V11H0V4h14v18zM28 22h-8l7.5-18h8L28 22z" fill="#d1d4dc" />
          <circle cx={20} cy={8} r={4} fill="#d1d4dc" />
        </svg>
        <span className="text-[12.6px] text-[#d1d4dc]">TradingView</span>
      </div>
    </div>
  );
}
